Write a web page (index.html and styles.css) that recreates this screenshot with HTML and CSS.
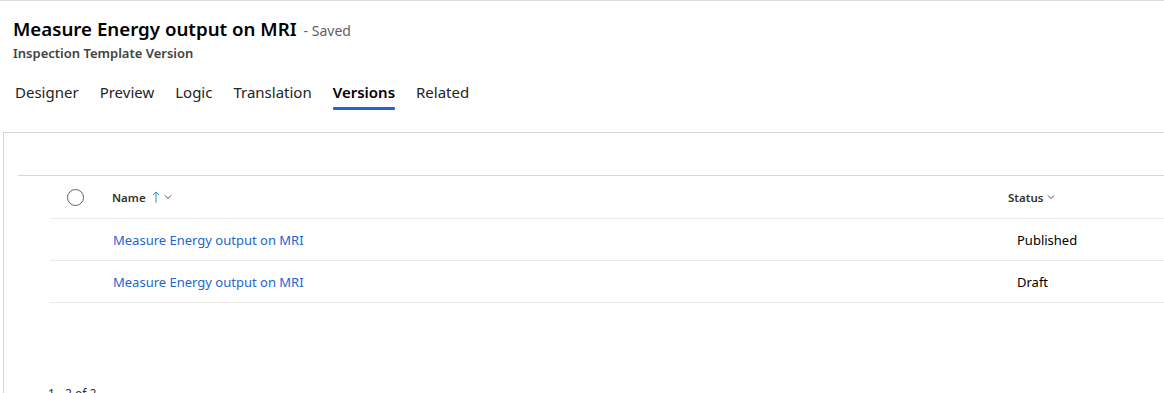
FILE: index.html
```html
<!DOCTYPE html>
<html>
<head>
<meta charset="utf-8">
<link rel="stylesheet" href="styles.css">
</head>
<body>
<header class="header">
  <div class="title-line">
    <h1 class="title">Measure Energy output on MRI</h1>
    <span class="saved">- Saved</span>
  </div>
  <div class="subtitle">Inspection Template Version</div>
  <nav class="tabs">
    <span class="tab">Designer</span>
    <span class="tab">Preview</span>
    <span class="tab">Logic</span>
    <span class="tab">Translation</span>
    <span class="tab active">Versions</span>
    <span class="tab">Related</span>
  </nav>
</header>
<section class="panel">
  <div class="toolbar"></div>
  <div class="grid">
    <div class="row head">
      <div class="cell check"><span class="circle"></span></div>
      <div class="cell name">Name
        <svg class="sort" width="8" height="12" viewBox="0 0 8 12"><path d="M4 11.5V1M1 4L4 1L7 4" fill="none" stroke="#2b88d8" stroke-width="1"/></svg>
        <svg class="chev" width="8" height="6" viewBox="0 0 8 6"><path d="M1 1.5L4 4.5L7 1.5" fill="none" stroke="#444" stroke-width="1"/></svg>
      </div>
      <div class="cell status">Status
        <svg class="chev" width="8" height="6" viewBox="0 0 8 6"><path d="M1 1.5L4 4.5L7 1.5" fill="none" stroke="#444" stroke-width="1"/></svg>
      </div>
    </div>
    <div class="row">
      <div class="cell check"></div>
      <div class="cell name"><a class="link">Measure Energy output on MRI</a></div>
      <div class="cell status val">Published</div>
    </div>
    <div class="row">
      <div class="cell check"></div>
      <div class="cell name"><a class="link">Measure Energy output on MRI</a></div>
      <div class="cell status val">Draft</div>
    </div>
  </div>
  <div class="footer">1 - 2 of 2</div>
</section>
</body>
</html>
```
FILE: styles.css
```css
html, body {
  margin: 0;
  padding: 0;
  background: #fff;
  overflow: hidden;
}
body {
  font-family: "Noto Sans", "Open Sans", sans-serif;
  color: #242424;
  border-top: 1px solid #dcdcdc;
  height: 392px;
}
.header {
  padding-left: 13px;
}
.title-line {
  display: flex;
  align-items: baseline;
  margin-top: 14px;
  height: 28px;
}
.title {
  margin: 0;
  font-size: 18.7px;
  font-weight: 600;
  line-height: 28px;
  color: #000;
}
.saved {
  margin-left: 7px;
  font-size: 14px;
  color: #616161;
}
.subtitle {
  font-size: 13px;
  font-weight: 600;
  color: #424242;
  line-height: 18px;
  margin-top: 1px;
}
.tabs {
  display: flex;
  gap: 21px;
  margin-top: 18px;
  padding-left: 2px;
  height: 52px;
}
.tab {
  font-size: 15px;
  line-height: 24px;
  color: #242424;
  position: relative;
}
.tab.active {
  font-weight: 600;
  color: #000;
}
.tab.active::after {
  content: "";
  position: absolute;
  left: 0;
  right: 0;
  top: 27px;
  height: 3px;
  border-radius: 1px;
  background: #2564cf;
}
.panel {
  margin-left: 3px;
  border-top: 1px solid #d6d6d6;
  border-left: 1px solid #d6d6d6;
  height: 261px;
  position: relative;
  overflow: hidden;
}
.toolbar {
  height: 42px;
  margin-left: 14px;
  border-bottom: 1px solid #d6d6d6;
}
.grid {
  margin-left: 46px;
}
.row {
  display: flex;
  align-items: center;
  height: 41px;
  border-bottom: 1px solid #edebe9;
}
.row.head {
  height: 42px;
}
.cell.check {
  width: 62px;
  display: flex;
  justify-content: flex-start;
}
.circle {
  width: 15px;
  height: 15px;
  border: 1px solid #616161;
  border-radius: 50%;
  margin-left: 17px;
}
.cell.name {
  width: 896px;
  display: flex;
  align-items: center;
}
.head .cell {
  font-size: 11.5px;
  font-weight: 600;
  color: #323130;
}
.sort {
  margin-left: 6px;
}
.chev {
  margin-left: 4px;
}
.link {
  font-size: 13px;
  color: #2266cf;
  margin-left: 1px;
}
.cell.status {
  display: flex;
  align-items: center;
}
.cell.status.val {
  font-size: 13px;
  color: #000;
  padding-left: 9px;
}
.footer {
  position: absolute;
  left: 44px;
  top: 252px;
  font-size: 12px;
  color: #323130;
}
```
